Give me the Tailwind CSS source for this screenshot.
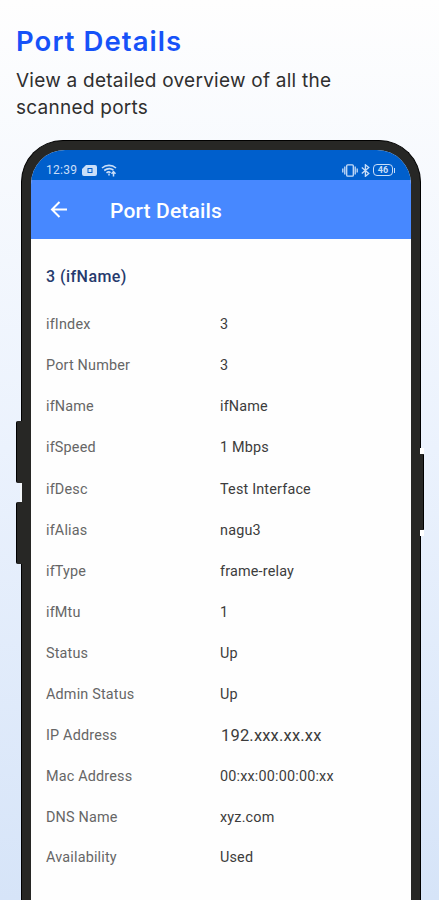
<!DOCTYPE html>
<html lang="en">
<head>
<meta charset="utf-8">
<title>Port Details</title>
<script src="https://cdn.jsdelivr.net/npm/@tailwindcss/browser@4"></script>
</head>
<body class="w-[439px] h-[900px] overflow-hidden bg-linear-to-b from-[#fefefe] via-[#ebf2fd] to-[#d6e4f8] font-[Roboto,sans-serif]">
<div class="flex flex-col h-[900px] overflow-hidden">
  <header class="h-[140px] shrink-0 pl-4 pt-[25px] font-[Inter,sans-serif] whitespace-nowrap">
    <h1 class="text-[27.5px] leading-[33px] font-semibold tracking-[1.05px] text-[#1652f8]">Port Details</h1>
    <p class="mt-[9px] text-[19px] leading-[27px] tracking-[0.25px] text-[#2f2f2f]">View a detailed overview of all the<br>scanned ports</p>
  </header>
  <main class="relative ml-[21px] w-[400px] h-[800px] shrink-0 rounded-t-[42px] bg-[#272725] border border-b-0 border-black px-[9px] pt-[9px]">
    <span class="absolute left-[-6px] top-[280px] w-[7px] h-[62px] rounded-l-[2px] border-l border-black bg-[#272725]"></span>
    <span class="absolute left-[-6px] top-[361px] w-[7px] h-[62px] rounded-l-[2px] border-l border-black bg-[#272725]"></span>
    <span class="absolute left-[-2px] top-[342px] w-[2px] h-[19px] bg-[#f4f7fb]"></span>
    <span class="absolute right-[-4px] top-[313px] w-[5px] h-[76px] rounded-r-[1px] border-r border-black bg-[#272725]"></span>
    <span class="absolute right-[-4px] top-[307px] w-[4px] h-[6px] bg-white"></span>
    <span class="absolute right-[-4px] top-[389px] w-[4px] h-[6px] bg-white"></span>
    <div class="h-full overflow-hidden rounded-t-[34px] bg-[#fefefe]">
      <div class="flex h-[30px] items-center justify-between bg-[#005fcc] pl-[15px] pr-[16px] pt-[10px] text-[#c9def8]">
        <div class="flex items-center">
          <span class="w-[36px] text-[12px] leading-none tracking-[0.3px]">12:39</span>
          <svg width="15" height="11" viewBox="0 0 15 11"><path fill="currentColor" fill-rule="evenodd" d="M4 0h9a2 2 0 0 1 2 2v7a2 2 0 0 1-2 2H2a2 2 0 0 1-2-2V4zM5.500 3v5h5V3zM6.500 4h3v3h-3z"/></svg>
          <svg class="ml-[4px]" width="16" height="13" viewBox="0 0 16 13" fill="none" stroke="currentColor" stroke-width="1.6"><path d="M1 4c4-3.5 10-3.5 14 0M3.2 6.500c3-2.300 6.600-2.300 9.200-.5M5.500 8.800c1.500-1.100 3-1.100 4 0"/><path stroke-width="1.500" d="M8 11.500V9.500m4.500 3V7.500m-2 2.200l2-2.200 2 2.200"/></svg>
        </div>
        <div class="flex items-center gap-[3px]">
          <svg width="16" height="13" viewBox="0 0 16 13" fill="none" stroke="currentColor" stroke-width="1.300"><rect x="4.700" y=".8" width="6.600" height="11.400" rx="1"/><path d="M2.800 2.500v8M13.200 2.500v8M.8 4.500v4M15.200 4.500v4"/></svg>
          <svg width="9" height="13" viewBox="0 0 9 13" fill="none" stroke="currentColor" stroke-width="1.300"><path d="M.8 3.500l7 6-3.400 2.800V.8l3.400 2.700-7 6"/></svg>
          <span class="flex h-[12px] w-[20px] items-center justify-center rounded-[4px] border border-current text-[9px] font-bold leading-none">46</span>
          <span class="-ml-[2px] h-[5px] w-px bg-current"></span>
        </div>
      </div>
      <div class="flex h-[59px] items-center bg-[#4788ff] pl-[19px] text-white">
        <svg class="mb-px" width="18" height="17" viewBox="0 0 18 17" fill="none" stroke="currentColor" stroke-width="2"><path d="M17 8.500H2M9.500 1L2 8.500 9.500 16"/></svg>
        <h2 class="ml-[42px] mt-[3px] text-[21px] font-medium leading-none tracking-[0.15px]">Port Details</h2>
      </div>
      <h3 class="ml-[15px] mt-[27px] mb-[18px] text-[16px] font-medium leading-[21px] tracking-[0.45px] text-[#263a6d]">3 (ifName)</h3>
      <dl class="grid grid-cols-[174px_1fr] auto-rows-[41.05px] items-center pl-[15px] text-[14.4px] leading-none tracking-[0.18px] text-[#3c3c3c] [&>dt]:text-[#666666]">
        <dt>ifIndex</dt><dd>3</dd>
        <dt>Port Number</dt><dd>3</dd>
        <dt>ifName</dt><dd>ifName</dd>
        <dt>ifSpeed</dt><dd>1 Mbps</dd>
        <dt>ifDesc</dt><dd>Test Interface</dd>
        <dt>ifAlias</dt><dd>nagu3</dd>
        <dt>ifType</dt><dd>frame-relay</dd>
        <dt>ifMtu</dt><dd>1</dd>
        <dt>Status</dt><dd>Up</dd>
        <dt>Admin Status</dt><dd>Up</dd>
        <dt>IP Address</dt><dd class="pl-px text-[16.5px]">192.xxx.xx.xx</dd>
        <dt>Mac Address</dt><dd>00:xx:00:00:00:xx</dd>
        <dt>DNS Name</dt><dd>xyz.com</dd>
        <dt class="-mt-[2px]">Availability</dt><dd class="-mt-[2px]">Used</dd>
      </dl>
    </div>
  </main>
</div>
</body>
</html>
